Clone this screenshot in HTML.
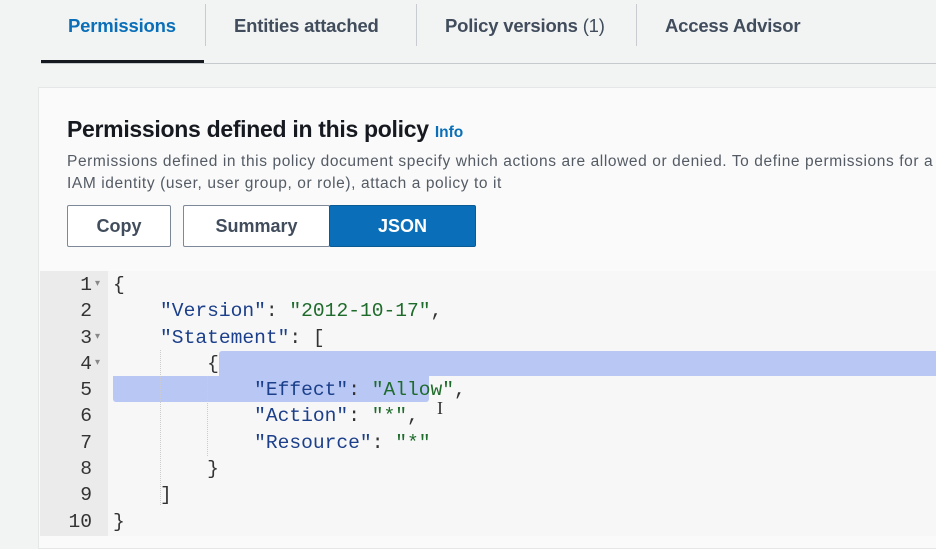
<!DOCTYPE html><html><head><style>
body{margin:0;width:936px;height:536px;overflow:hidden;background:#f2f3f3;font-family:"Liberation Sans",sans-serif;position:relative}
.t{position:absolute;top:15px;font-size:18.5px;font-weight:bold;color:#414d5c;letter-spacing:-0.2px}
.sep{position:absolute;top:4px;width:1px;height:42px;background:#c8ccd0}
.card{position:absolute;left:38px;top:87px;width:900px;height:460px;background:#fafafa;border:1px solid #e4e6e8}
.btn{position:absolute;top:205px;height:40px;border:1px solid #7d8998;background:#fff;font-weight:bold;font-size:18px;color:#414d5c;text-align:center;line-height:40px;border-radius:2px;box-sizing:content-box}
.ed{position:absolute;left:40px;top:271px;width:896px;height:265px;background:#f7f7f7}
.gut{position:absolute;left:40px;top:271px;width:68px;height:265px;background:#ebebeb}
.ln{position:absolute;font-family:"Liberation Mono",monospace;font-size:19.6px;color:#333;white-space:pre;line-height:26.3px}
.k{color:#1b3f8a}.s{color:#1e6b2b}
</style></head><body>
<div class="t" style="left:68px;color:#0a6fb8">Permissions</div>
<div class="sep" style="left:205px"></div>
<div class="t" style="left:234px">Entities attached</div>
<div class="sep" style="left:416px"></div>
<div class="t" style="left:445px">Policy versions <span style="font-weight:normal">(1)</span></div>
<div class="sep" style="left:636px"></div>
<div class="t" style="left:665px">Access Advisor</div>
<div style="position:absolute;left:41px;top:63px;width:900px;height:1px;background:#c6cacd"></div>
<div style="position:absolute;left:41px;top:60px;width:163px;height:3px;background:#16191f"></div>
<div class="card"></div>
<div style="position:absolute;left:67px;top:116px;font-size:23px;font-weight:bold;color:#16191f;letter-spacing:-0.3px">Permissions defined in this policy <span style="font-size:15.5px;color:#0a6fb8;letter-spacing:0">Info</span></div>
<div style="position:absolute;left:67px;top:151px;font-size:15.5px;color:#545b64;line-height:22px;white-space:nowrap;letter-spacing:0.6px">Permissions defined in this policy document specify which actions are allowed or denied. To define permissions for a<br>IAM identity (user, user group, or role), attach a policy to it</div>
<div class="btn" style="left:67px;width:102px">Copy</div>
<div class="btn" style="left:183px;width:145px">Summary</div>
<div class="btn" style="left:329px;width:145px;background:#0a6fb8;border-color:#0a5a94;color:#fff">JSON</div>
<div class="ed"></div><div class="gut"></div>
<div style="position:absolute;left:219px;top:351px;width:717px;height:25px;background:#b8c7f3;border-radius:3px 0 0 0"></div>
<div style="position:absolute;left:113px;top:376px;width:316px;height:26px;background:#b8c7f3;border-radius:0 0 3px 3px"></div>
<div style="position:absolute;left:160px;top:350px;height:155px;border-left:1px dotted #ccc"></div>
<div style="position:absolute;left:207px;top:376px;height:80px;border-left:1px dotted #ccc"></div>
<div class="ln" style="left:40px;top:272px;width:52px;text-align:right;color:#333">1
2
3
4
5
6
7
8
9
10</div>
<div class="ln" style="left:95px;top:272px;font-size:10px;color:#888;line-height:26.3px">▾<br><br>▾<br>▾</div>
<div class="ln" style="left:113px;top:272px">{
    <span class="k">"Version"</span>: <span class="s">"2012-10-17"</span>,
    <span class="k">"Statement"</span>: [
        {
            <span class="k">"Effect"</span>: <span class="s">"Allow"</span>,
            <span class="k">"Action"</span>: <span class="s">"*"</span>,
            <span class="k">"Resource"</span>: <span class="s">"*"</span>
        }
    ]
}</div>
<div style="position:absolute;left:437px;top:398px;font-size:18px;color:#333;font-family:'Liberation Serif',serif">I</div>
</body></html>
